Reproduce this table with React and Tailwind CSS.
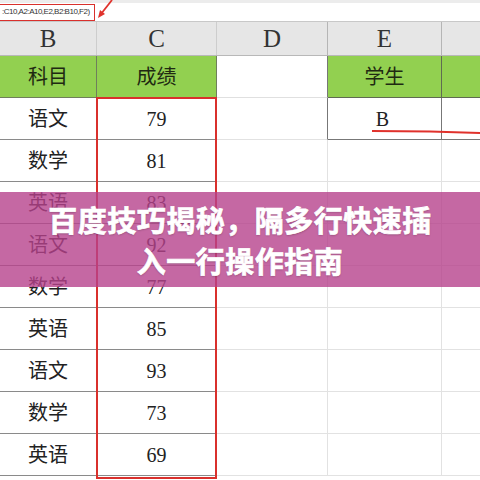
import React from "react"

const cellFont = { fontFamily: '"Liberation Serif", "Noto Sans CJK SC", serif' }

const rows = [
  ["语文", 79],
  ["数学", 81],
  ["英语", 83],
  ["语文", 92],
  ["数学", 77],
  ["英语", 85],
  ["语文", 93],
  ["数学", 73],
  ["英语", 69],
]

function Cell({ className = "", children }) {
  return (
    <div className={"flex items-center justify-center shrink-0 " + className}>
      {children}
    </div>
  )
}

export default function App() {
  return (
    <div className="relative w-[480px] h-[480px] overflow-hidden bg-white text-[#222]" style={cellFont}>
      {/* formula bar */}
      <div className="h-[22px] border-b border-[#c8c8c8] bg-white flex flex-col">
        <div className="h-[3px] bg-[#ececec]" />
        <div className="flex-1 flex items-center">
          <div className="ml-[-3px] w-[98px] h-[17px] border-[1.5px] border-[#d9302c] flex items-center pl-[4px] whitespace-nowrap text-[8px] text-[#333] tracking-[-0.5px]" style={{ fontFamily: '"Liberation Sans", Arial, sans-serif' }}>
            :C10,A2:A10,E2,B2:B10,F2)
          </div>
        </div>
      </div>

      {/* column letters */}
      <div className="flex h-[34px] bg-[#e6e6e6] border-b border-[#b8b8b8] text-[25px] text-[#333]">
        <Cell className="w-[97px] border-r border-[#cdcdcd]">B</Cell>
        <Cell className="w-[120px] border-r border-[#cdcdcd]">C</Cell>
        <Cell className="w-[111px] border-r border-[#b5b5b5]">D</Cell>
        <Cell className="w-[114px] border-r border-[#b5b5b5]">E</Cell>
        <Cell className="w-[38px]"></Cell>
      </div>

      {/* header row */}
      <div className="flex h-[42px] text-[20px] text-[#1f2a12]">
        <Cell className="w-[97px] bg-[#92d050] border-r border-b border-[#6f7f5c]">科目</Cell>
        <Cell className="w-[120px] bg-[#92d050] border-r border-b border-[#6f7f5c]">成绩</Cell>
        <Cell className="w-[111px] bg-white border-r border-b border-r-[#777] border-b-[#e0e0e0]"></Cell>
        <Cell className="w-[114px] bg-[#92d050] border-r border-b border-[#5f6b52]">学生</Cell>
        <Cell className="w-[38px] bg-[#92d050] border-b border-[#5f6b52]"></Cell>
      </div>

      {/* data rows */}
      {rows.map(([subject, score], i) => {
        const first = i === 0
        return (
          <div key={i} className="flex h-[42px] text-[20px]">
            <Cell className="w-[97px] border-r border-b border-[#8a8a8a]">{subject}</Cell>
            <Cell className="w-[120px] border-r border-b border-[#8a8a8a]">{score}</Cell>
            <Cell className={"w-[111px] border-r border-b border-b-[#e2e2e2] " + (first ? "border-r-[#777]" : "border-r-[#e2e2e2]")}></Cell>
            <Cell className={"w-[114px] border-r border-b " + (first ? "border-[#777]" : "border-[#e2e2e2]")}>
              {first ? <span className="mr-[4px]">B</span> : null}
            </Cell>
            <Cell className={"w-[38px] border-b " + (first ? "border-[#777]" : "border-[#e2e2e2]")}></Cell>
          </div>
        )
      })}

      {/* red box around scores */}
      <div className="absolute left-[96px] top-[97px] w-[121px] h-[382px] border-2 border-[#d9302c] pointer-events-none" />

      {/* red arrow near formula */}
      <svg className="absolute left-[94px] top-0" width="22" height="22" viewBox="0 0 22 22">
        <line x1="18" y1="0" x2="7" y2="14" stroke="#e0322c" strokeWidth="1.8" />
        <polygon points="4,18 6,10 11,14" fill="#e0322c" />
      </svg>

      {/* red underline under E2 */}
      <svg className="absolute left-[370px] top-[128px]" width="110" height="8" viewBox="0 0 110 8">
        <path d="M2 3 L60 3.5 L110 5" stroke="#e0322c" strokeWidth="1.8" fill="none" />
      </svg>

      {/* title banner */}
      <div className="absolute left-0 top-[192px] w-[480px] h-[95px] bg-[#b6428c]/80 flex flex-col items-center justify-center">
        <div className="text-white font-bold text-[29px] leading-[41px] text-center tracking-[0.5px] [-webkit-text-stroke:0.7px_white] [text-shadow:0_1px_2px_rgba(0,0,0,0.25)]" style={{ fontFamily: '"Noto Sans CJK SC", "Noto Sans", sans-serif' }}>
          <div>百度技巧揭秘，隔多行快速插</div>
          <div>入一行操作指南</div>
        </div>
      </div>
    </div>
  )
}
